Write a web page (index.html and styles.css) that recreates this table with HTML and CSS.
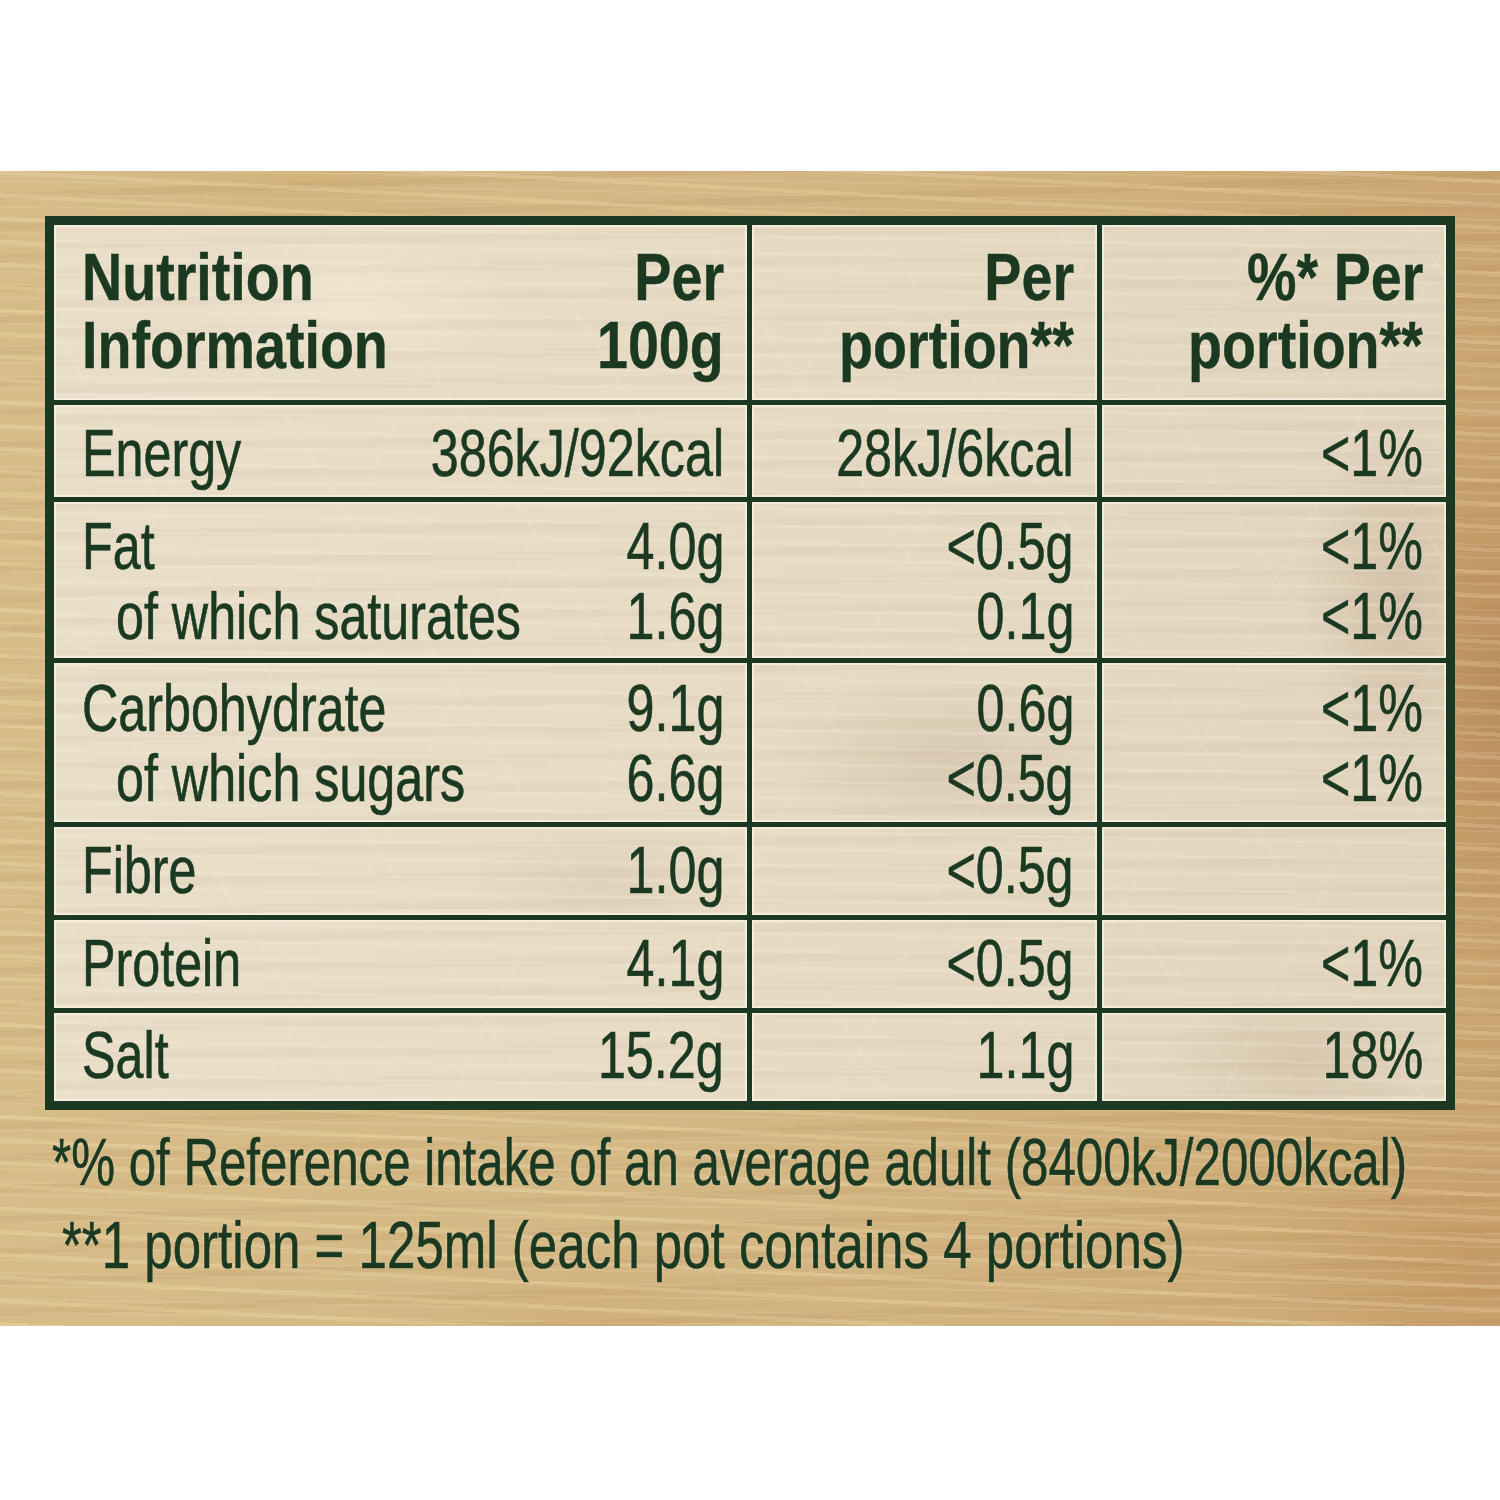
FILE: index.html
```html
<!DOCTYPE html>
<html lang="en">
<head>
<meta charset="utf-8">
<title>Nutrition Information</title>
<link rel="stylesheet" href="styles.css">
</head>
<body>
<div class="wood">
  <div class="table">
    <div class="cell head">
      <div class="line"><span class="l">Nutrition</span><span class="r">Per</span></div>
      <div class="line"><span class="l">Information</span><span class="r">100g</span></div>
    </div>
    <div class="cell head right">
      <div class="line"><span class="r">Per</span></div>
      <div class="line"><span class="r">portion**</span></div>
    </div>
    <div class="cell head right">
      <div class="line"><span class="r">%* Per</span></div>
      <div class="line"><span class="r">portion**</span></div>
    </div>

    <div class="cell energy">
      <div class="line"><span class="l">Energy</span><span class="r">386kJ/92kcal</span></div>
    </div>
    <div class="cell energy right"><div class="line"><span class="r">28kJ/6kcal</span></div></div>
    <div class="cell energy right"><div class="line"><span class="r">&lt;1%</span></div></div>

    <div class="cell fat">
      <div class="line"><span class="l">Fat</span><span class="r">4.0g</span></div>
      <div class="line sub"><span class="l">of which saturates</span><span class="r">1.6g</span></div>
    </div>
    <div class="cell fat right">
      <div class="line"><span class="r">&lt;0.5g</span></div>
      <div class="line"><span class="r">0.1g</span></div>
    </div>
    <div class="cell fat right">
      <div class="line"><span class="r">&lt;1%</span></div>
      <div class="line"><span class="r">&lt;1%</span></div>
    </div>

    <div class="cell carb">
      <div class="line"><span class="l">Carbohydrate</span><span class="r">9.1g</span></div>
      <div class="line sub"><span class="l">of which sugars</span><span class="r">6.6g</span></div>
    </div>
    <div class="cell carb right">
      <div class="line"><span class="r">0.6g</span></div>
      <div class="line"><span class="r">&lt;0.5g</span></div>
    </div>
    <div class="cell carb right">
      <div class="line"><span class="r">&lt;1%</span></div>
      <div class="line"><span class="r">&lt;1%</span></div>
    </div>

    <div class="cell single">
      <div class="line"><span class="l">Fibre</span><span class="r">1.0g</span></div>
    </div>
    <div class="cell single right"><div class="line"><span class="r">&lt;0.5g</span></div></div>
    <div class="cell single right"></div>

    <div class="cell single">
      <div class="line"><span class="l">Protein</span><span class="r">4.1g</span></div>
    </div>
    <div class="cell single right"><div class="line"><span class="r">&lt;0.5g</span></div></div>
    <div class="cell single right"><div class="line"><span class="r">&lt;1%</span></div></div>

    <div class="cell salt">
      <div class="line"><span class="l">Salt</span><span class="r">15.2g</span></div>
    </div>
    <div class="cell salt right"><div class="line"><span class="r">1.1g</span></div></div>
    <div class="cell salt right"><div class="line"><span class="r">18%</span></div></div>
  </div>

  <div class="notes">
    <p class="note first"><span class="l">*% of Reference intake of an average adult (8400kJ/2000kcal)</span></p>
    <p class="note second"><span class="l">**1 portion = 125ml (each pot contains 4 portions)</span></p>
  </div>
</div>
</body>
</html>
```

FILE: styles.css
```css
html, body {
  margin: 0;
  padding: 0;
  background: #ffffff;
}

body {
  font-family: "Liberation Sans", Arial, sans-serif;
  color: #1b3921;
}

.wood {
  margin-top: 171px;
  height: 1155px;
  box-sizing: border-box;
  padding: 45px 45px 0 45px;
  overflow: hidden;
  background:
    repeating-linear-gradient(3deg, rgba(255, 240, 205, 0.18) 0 4px, transparent 4px 23px),
    repeating-linear-gradient(-2deg, rgba(160, 110, 60, 0.09) 0 7px, transparent 7px 31px),
    repeating-linear-gradient(1deg, rgba(255, 235, 200, 0.12) 0 2px, transparent 2px 13px),
    radial-gradient(ellipse 220px 420px at 100% 45%, rgba(170, 120, 72, 0.50), transparent 70%),
    radial-gradient(ellipse 300px 200px at 98% 95%, rgba(185, 135, 85, 0.35), transparent 70%),
    radial-gradient(ellipse 300px 120px at 20% 0%, rgba(200, 160, 100, 0.30), transparent 70%),
    radial-gradient(ellipse 400px 140px at 40% 100%, rgba(195, 150, 95, 0.25), transparent 70%),
    linear-gradient(90deg, #d7bc88 0%, #d4b884 45%, #cfae79 80%, #c9a571 100%);
}

.table {
  display: grid;
  grid-template-columns: 693px 345px 344px;
  grid-template-rows: 175px 92px 156px 159px 88px 88px 88px;
  gap: 5px;
  padding: 9px;
  background: #1d3822;
  width: 1410px;
  box-sizing: border-box;
}

.cell {
  box-sizing: border-box;
  padding: 9px 23px 0 28px;
  font-size: 67px;
  line-height: 70px;
  background:
    repeating-linear-gradient(58deg, transparent 0 60px, rgba(255, 250, 235, 0.12) 60px 62px, transparent 62px 151px),
    repeating-linear-gradient(-64deg, transparent 0 80px, rgba(255, 250, 235, 0.10) 80px 82px, transparent 82px 173px),
    repeating-linear-gradient(1deg, rgba(255, 250, 235, 0.14) 0 3px, transparent 3px 17px),
    repeating-linear-gradient(-1deg, rgba(185, 160, 140, 0.08) 0 8px, transparent 8px 29px),
    radial-gradient(ellipse 260px 120px at 950px 760px, rgba(190, 165, 145, 0.30), transparent 70%),
    radial-gradient(ellipse 140px 260px at 1400px 600px, rgba(185, 155, 130, 0.35), transparent 70%),
    radial-gradient(ellipse 200px 90px at 1300px 1060px, rgba(190, 160, 135, 0.30), transparent 70%),
    radial-gradient(ellipse 200px 80px at 600px 880px, rgba(200, 180, 160, 0.25), transparent 70%),
    radial-gradient(ellipse 250px 100px at 350px 300px, rgba(255, 250, 235, 0.30), transparent 70%),
    linear-gradient(90deg, #e9dec8, #e6dac2 55%, #e1d4bd);
  background-attachment: fixed;
  box-shadow: inset 0 0 0 2px rgba(246, 240, 224, 0.85);
  text-shadow: 0 0 2px rgba(250, 245, 230, 0.95);
}

.line {
  display: grid;
  grid-template-columns: minmax(0, 1fr) auto;
  white-space: nowrap;
}

.right .line {
  display: flex;
  justify-content: flex-end;
}

.line span {
  display: inline-block;
  transform: scaleX(0.75);
  -webkit-text-stroke: 0.7px #1b3921;
}

.line .l {
  transform-origin: left center;
}

.line .r {
  transform-origin: right center;
  justify-self: end;
}

.sub {
  padding-left: 34px;
}

.head {
  padding-top: 18px;
  font-weight: bold;
  line-height: 68px;
}

.head .line span {
  transform: scaleX(0.83);
  -webkit-text-stroke: 0.5px #1b3921;
}

.energy {
  padding-top: 13px;
}

.fat {
  padding-top: 9px;
}

.carb {
  padding-top: 10px;
}

.single {
  padding-top: 8px;
}

.salt {
  padding-top: 7px;
}

.notes {
  padding-top: 10px;
}

.note {
  margin: 0;
  font-size: 67px;
  line-height: 83px;
  padding-left: 7px;
  white-space: nowrap;
  text-shadow: 0 0 2px rgba(250, 242, 222, 0.8);
}

.note .l {
  display: inline-block;
  transform: scaleX(0.735);
  transform-origin: left center;
  -webkit-text-stroke: 0.7px #1b3921;
}

.note.second {
  padding-left: 17px;
}

.note.second .l {
  transform: scaleX(0.762);
}
```
